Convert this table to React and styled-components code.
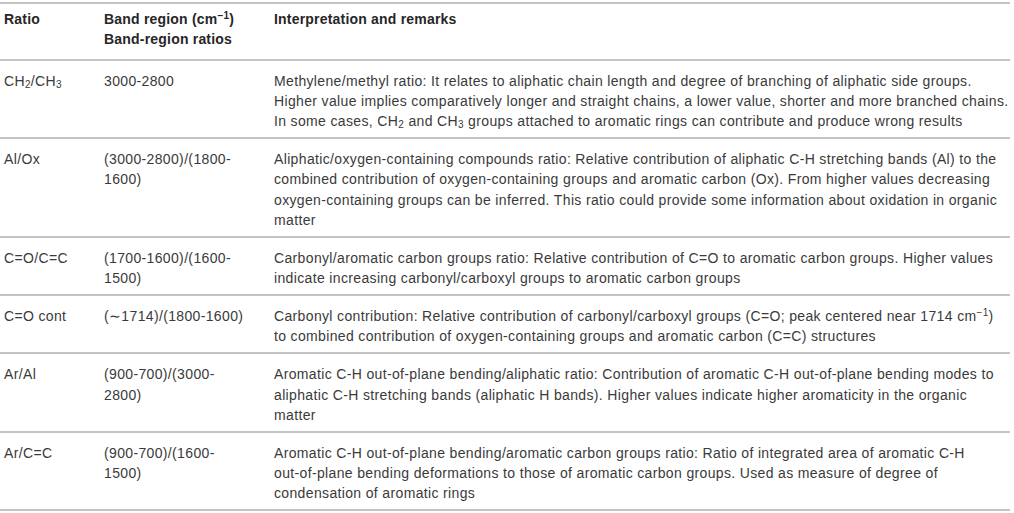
import styled, { createGlobalStyle } from 'styled-components';

const Global = createGlobalStyle`
  body { margin: 0; background: #fff; font-family: "Liberation Sans", Arial, sans-serif; }
`;

const Table = styled.div`
  width: 1010px;
  margin-top: 2px;
  border-top: 2px solid #c4c4c4;
  color: #3a3a3a;
  font-size: 14px;
  line-height: 20.25px;
  letter-spacing: 0.35px;
`;

const Row = styled.div`
  display: grid;
  grid-template-columns: 100px 170px 1fr;
  padding: ${p => (p.$head ? '5px 0 9px' : '10px 0 5.75px')};
  border-bottom: 2px solid #c4c4c4;
  font-weight: ${p => (p.$head ? 700 : 400)};
  color: ${p => (p.$head ? '#262626' : '#3a3a3a')};
  letter-spacing: ${p => (p.$head ? '0.2px' : 'inherit')};
`;

const Cell = styled.div`
  padding-left: 4px;
  white-space: nowrap;
`;

const Sub = styled.sub`
  font-size: 10px;
  line-height: 0;
  vertical-align: -2px;
`;

const Sup = styled.sup`
  font-size: 10px;
  line-height: 0;
  vertical-align: 5px;
`;

const lines = arr => arr.map((l, i) => (
  <span key={i}>{i > 0 && <br />}{l}</span>
));

const rows = [
  {
    ratio: <>CH<Sub>2</Sub>/CH<Sub>3</Sub></>,
    band: ['3000-2800'],
    text: [
      'Methylene/methyl ratio: It relates to aliphatic chain length and degree of branching of aliphatic side groups.',
      'Higher value implies comparatively longer and straight chains, a lower value, shorter and more branched chains.',
      <>In some cases, CH<Sub>2</Sub> and CH<Sub>3</Sub> groups attached to aromatic rings can contribute and produce wrong results</>,
    ],
  },
  {
    ratio: 'Al/Ox',
    band: ['(3000-2800)/(1800-', '1600)'],
    text: [
      'Aliphatic/oxygen-containing compounds ratio: Relative contribution of aliphatic C-H stretching bands (Al) to the',
      'combined contribution of oxygen-containing groups and aromatic carbon (Ox). From higher values decreasing',
      'oxygen-containing groups can be inferred. This ratio could provide some information about oxidation in organic',
      'matter',
    ],
  },
  {
    ratio: 'C=O/C=C',
    band: ['(1700-1600)/(1600-', '1500)'],
    text: [
      'Carbonyl/aromatic carbon groups ratio: Relative contribution of C=O to aromatic carbon groups. Higher values',
      'indicate increasing carbonyl/carboxyl groups to aromatic carbon groups',
    ],
  },
  {
    ratio: 'C=O cont',
    band: ['(\u223C1714)/(1800-1600)'],
    text: [
      <>Carbonyl contribution: Relative contribution of carbonyl/carboxyl groups (C=O; peak centered near 1714 cm<Sup>{'\u22121'}</Sup>)</>,
      'to combined contribution of oxygen-containing groups and aromatic carbon (C=C) structures',
    ],
  },
  {
    ratio: 'Ar/Al',
    band: ['(900-700)/(3000-', '2800)'],
    text: [
      'Aromatic C-H out-of-plane bending/aliphatic ratio: Contribution of aromatic C-H out-of-plane bending modes to',
      'aliphatic C-H stretching bands (aliphatic H bands). Higher values indicate higher aromaticity in the organic',
      'matter',
    ],
  },
  {
    ratio: 'Ar/C=C',
    band: ['(900-700)/(1600-', '1500)'],
    text: [
      'Aromatic C-H out-of-plane bending/aromatic carbon groups ratio: Ratio of integrated area of aromatic C-H',
      'out-of-plane bending deformations to those of aromatic carbon groups. Used as measure of degree of',
      'condensation of aromatic rings',
    ],
  },
];

export default function App() {
  return (
    <>
      <Global />
      <Table>
        <Row $head>
          <Cell>Ratio</Cell>
          <Cell>Band region (cm<Sup>{'\u22121'}</Sup>)<br />Band-region ratios</Cell>
          <Cell>Interpretation and remarks</Cell>
        </Row>
        {rows.map((r, i) => (
          <Row key={i}>
            <Cell>{r.ratio}</Cell>
            <Cell>{lines(r.band)}</Cell>
            <Cell>{lines(r.text)}</Cell>
          </Row>
        ))}
      </Table>
    </>
  );
}
